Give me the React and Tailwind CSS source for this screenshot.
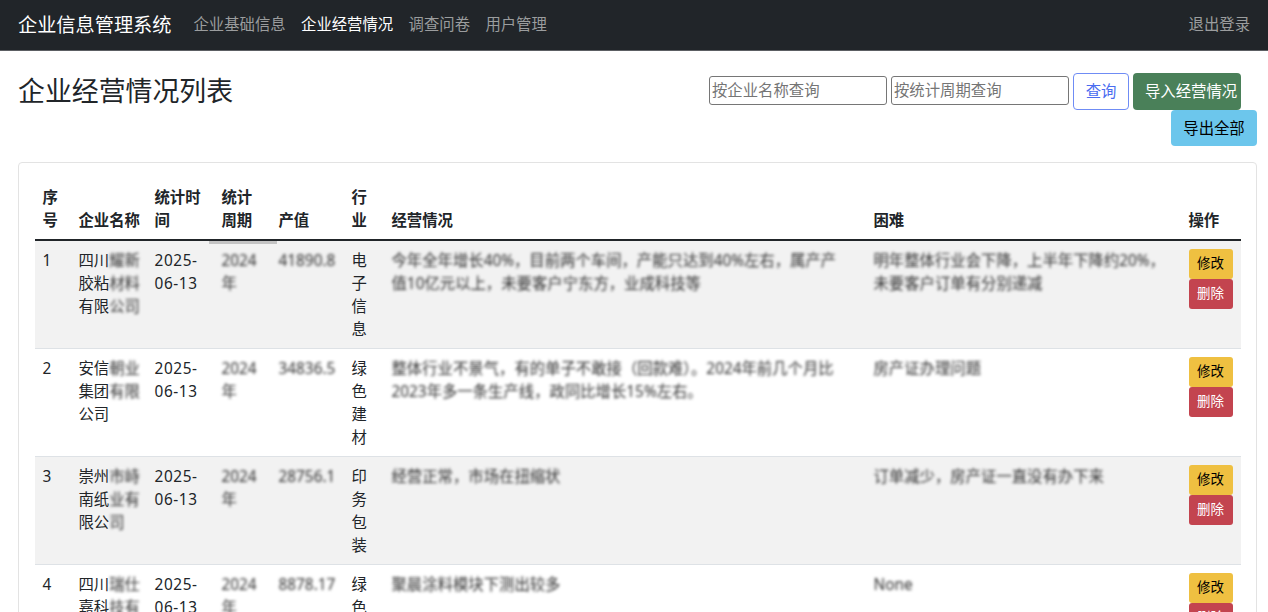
const ROWS = [
  {
    id: 1,
    name: [['四川', '耀新'], ['胶粘', '材料'], ['有限', '公司']],
    period: '2024',
    value: '41890.8',
    industry: '电子信息',
    status: ['今年全年增长40%，目前两个车间，产能只达到40%左右，属产产', '值10亿元以上，未要客户宁东方，业成科技等'],
    trouble: ['明年整体行业会下降，上半年下降约20%，', '未要客户订单有分别递减'],
  },
  {
    id: 2,
    name: [['安信', '朝业'], ['集团', '有限'], ['公司', '']],
    period: '2024',
    value: '34836.5',
    industry: '绿色建材',
    status: ['整体行业不景气，有的单子不敢接（回款难）。2024年前几个月比', '2023年多一条生产线，政同比增长15%左右。'],
    trouble: ['房产证办理问题'],
  },
  {
    id: 3,
    name: [['崇州', '市峙'], ['南纸', '业有'], ['限公', '司']],
    period: '2024',
    value: '28756.1',
    industry: '印务包装',
    status: ['经营正常，市场在扭缩状'],
    trouble: ['订单减少，房产证一直没有办下来'],
  },
  {
    id: 4,
    name: [['四川', '瑞仕'], ['嘉科', '技有'], ['限公', '司']],
    period: '2024',
    value: '8878.17',
    industry: '绿色建材',
    status: ['聚晨涂料模块下测出较多'],
    trouble: ['None'],
  },
]

const Blur = ({ children }) => <span className="blur-[1.4px] text-[#2f2f2f]">{children}</span>

function Row({ row, odd }) {
  return (
    <tr className={`border-b border-[#dee2e6] align-top ${odd ? 'bg-[#f2f2f2]' : 'bg-white'}`}>
      <td className="p-[7.5px]">{row.id}</td>
      <td className="p-[7.5px]">
        {row.name.map((line, i) => (
          <div key={i} className="whitespace-nowrap">{line[0]}<Blur>{line[1]}</Blur></div>
        ))}
      </td>
      <td className="p-[7.5px] tracking-[0.6px]">2025-<br />06-13</td>
      <td className="relative p-[7.5px]">
        {row.id === 1 && <div className="absolute left-[-5px] top-0 h-[3px] w-[68px] bg-[#c4c4c4]" />}
        <Blur>{row.period}</Blur><br /><Blur>年</Blur>
      </td>
      <td className="p-[7.5px] whitespace-nowrap"><Blur>{row.value}</Blur></td>
      <td className="p-[7.5px]">
        {row.industry.split('').map((c, i) => <div key={i}>{c}</div>)}
      </td>
      <td className="p-[7.5px]">
        {row.status.map((line, i) => <div key={i} className="whitespace-nowrap"><Blur>{line}</Blur></div>)}
      </td>
      <td className="p-[7.5px]">
        {row.trouble.map((line, i) => <div key={i} className="whitespace-nowrap"><Blur>{line}</Blur></div>)}
      </td>
      <td className="p-[7.5px]">
        <button className="block h-[30px] w-[44px] rounded-[3px] bg-[#efc041] text-[13.44px] text-black">修改</button>
        <button className="block h-[30px] w-[44px] rounded-[3px] bg-[#c3444f] text-[13.44px] text-white">删除</button>
      </td>
    </tr>
  )
}

export default function App() {
  return (
    <div className="h-screen overflow-hidden bg-white font-['Noto_Sans','Noto_Sans_CJK_SC',sans-serif] text-[15.36px] leading-[23px] text-[#212529]">
      <nav className="flex h-[51px] items-center justify-between border-b border-[#5c5f63] bg-[#212529] px-[18px] pb-[2px]">
        <div className="flex items-center">
          <a className="mr-[22px] text-[19.2px] text-white">企业信息管理系统</a>
          <div className="flex gap-[15.36px] text-[#9b9d9e]">
            <a>企业基础信息</a>
            <a className="text-white">企业经营情况</a>
            <a>调查问卷</a>
            <a>用户管理</a>
          </div>
        </div>
        <a className="text-[#9b9d9e]">退出登录</a>
      </nav>

      <main className="pl-[18px] pr-[11px] pt-[22px]">
        <div className="mb-[16px] flex justify-between">
          <h3 className="pt-[2px] text-[26.88px] leading-[32px]">企业经营情况列表</h3>
          <div className="flex flex-col items-end">
            <div className="mr-[16px] flex items-start">
              <input placeholder="按企业名称查询" className="mt-[3px] h-[29px] w-[178px] rounded-[3px] border border-[#767676] px-[2px] placeholder:text-[#757575]" />
              <input placeholder="按统计周期查询" className="ml-[4px] mt-[3px] h-[29px] w-[178px] rounded-[3px] border border-[#767676] px-[2px] placeholder:text-[#757575]" />
              <button className="ml-[4px] h-[37px] w-[56px] rounded-[4px] border border-[#6f8cf5] text-[#4a6cf0]">查询</button>
              <button className="ml-[4px] h-[37px] w-[108px] rounded-[4px] bg-[#4a8059] pl-[12px] text-left text-white">导入经营情况</button>
            </div>
            <button className="h-[36px] w-[86px] rounded-[4px] bg-[#6cc6ec] text-black">导出全部</button>
          </div>
        </div>

        <div className="rounded-[4px] border border-[#e3e3e3] px-[16px] pt-[15px]">
          <table className="w-[1206px] table-fixed border-collapse">
            <colgroup>
              <col className="w-[36px]" />
              <col className="w-[76px]" />
              <col className="w-[67px]" />
              <col className="w-[57px]" />
              <col className="w-[73px]" />
              <col className="w-[40px]" />
              <col className="w-[482px]" />
              <col className="w-[315px]" />
              <col className="w-[60px]" />
            </colgroup>
            <thead>
              <tr className="border-b-2 border-[#212529] align-bottom text-left font-bold">
                <th className="p-[7.5px]">序号</th>
                <th className="p-[7.5px] whitespace-nowrap">企业名称</th>
                <th className="p-[7.5px]">统计时间</th>
                <th className="p-[7.5px]">统计周期</th>
                <th className="p-[7.5px]">产值</th>
                <th className="p-[7.5px]">行业</th>
                <th className="p-[7.5px] whitespace-nowrap">经营情况</th>
                <th className="p-[7.5px]">困难</th>
                <th className="p-[7.5px]">操作</th>
              </tr>
            </thead>
            <tbody>
              {ROWS.map((row, i) => <Row key={row.id} row={row} odd={i % 2 === 0} />)}
            </tbody>
          </table>
        </div>
      </main>
    </div>
  )
}
